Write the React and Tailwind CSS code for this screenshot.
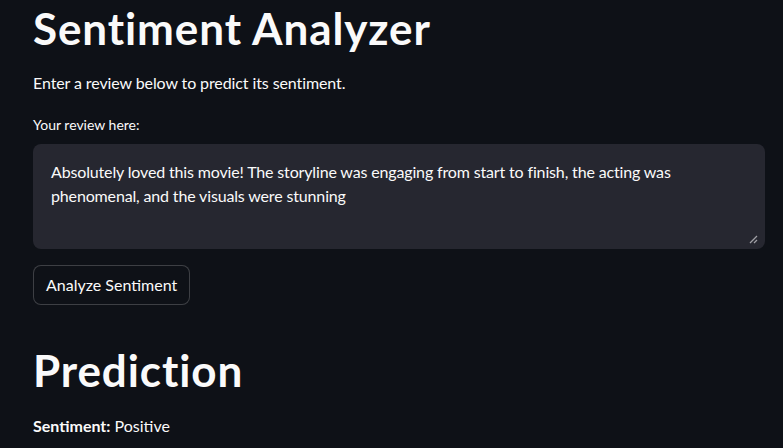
import React from 'react';

const font = { fontFamily: 'Lato, "Noto Sans", sans-serif' };

export default function App() {
  const review =
    'Absolutely loved this movie! The storyline was engaging from start to finish, the acting was phenomenal, and the visuals were stunning';

  return (
    <div className="w-[783px] h-[448px] overflow-hidden bg-[#0e1117] text-[#fafafa]" style={font}>
      <div className="pl-[33px] pr-[18px]">
        {/* title */}
        <h1 className="text-[44px] font-bold leading-[56px] tracking-[0.9px]">Sentiment Analyzer</h1>
        <p className="mt-[15px] text-[16px] leading-[24px] tracking-[-0.1px]">Enter a review below to predict its sentiment.</p>

        {/* text area */}
        <label className="block mt-[20px] text-[14px] leading-[20px]">Your review here:</label>
        <div className="relative mt-[9px] h-[105px] rounded-[8px] bg-[#262730]">
          <div className="px-[18px] pt-[16px] text-[16px] leading-[24px] pr-[40px] tracking-[-0.15px]">{review}</div>
          <svg className="absolute right-[7px] bottom-[5px]" width="9" height="9" viewBox="0 0 9 9">
            <path d="M8 1 L1 8 M8 5 L5 8" stroke="#a0a0a6" strokeWidth="1.3" />
          </svg>
        </div>

        {/* button */}
        <button className="mt-[16px] h-[40px] px-[12px] rounded-[8px] border border-[#fafafa33] bg-[#0e1117] text-[16px] text-[#fafafa]">
          Analyze Sentiment
        </button>

        <h1 className="mt-[37px] text-[44px] font-bold leading-[56px] tracking-[0.9px]">Prediction</h1>
        <p className="mt-[16px] text-[16px] leading-[24px]">
          <span className="font-bold">Sentiment:</span> Positive
        </p>
      </div>
    </div>
  );
}
